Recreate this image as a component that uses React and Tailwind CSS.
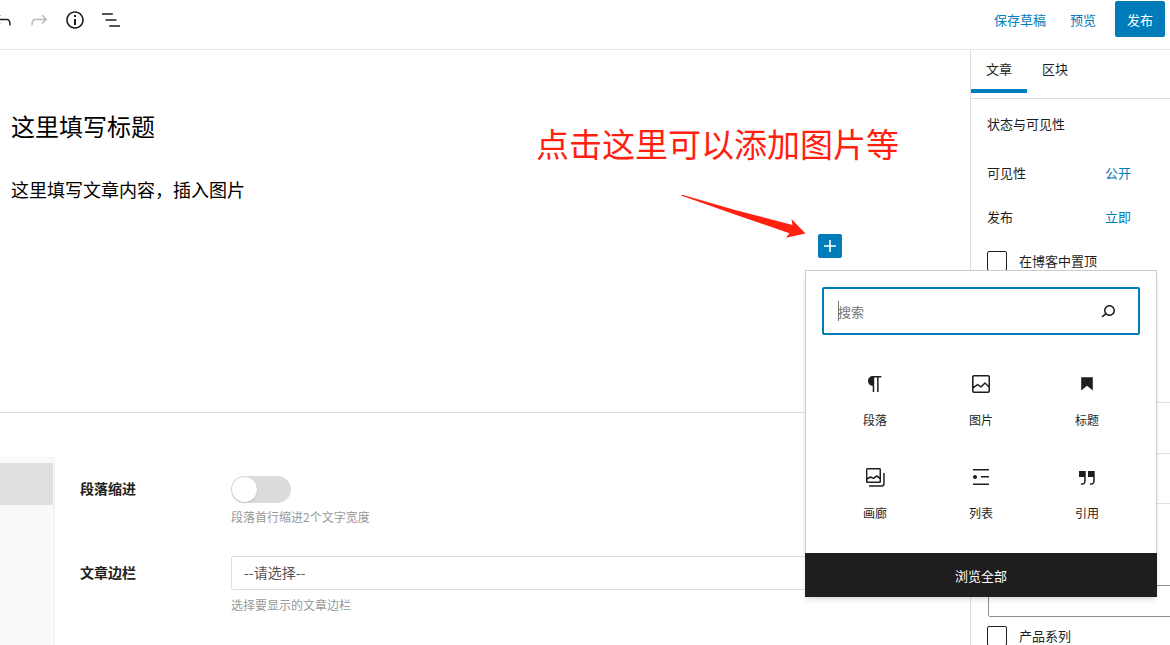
import { useState } from 'react';
import clsx from 'clsx';

const ICONS = {
    undo: 'M18.3 11.7c-.6-.6-1.4-.9-2.3-.9H6.7l2.9-3.3-1.1-1-4.5 5L8.5 16l1-1-2.7-2.7H16c.5 0 .9.2 1.3.5 1 1 1 3.4 1 4.5v.3h1.5v-.2c0-1.5 0-4.3-1.5-5.7z',
    redo: 'M15.6 6.5l-1.1 1 2.9 3.3H8c-.9 0-1.7.3-2.3.9-1.4 1.5-1.4 4.2-1.4 5.6v.2h1.5v-.3c0-1.1 0-3.5 1-4.5.3-.3.7-.5 1.3-.5h9.2L14.5 15l1.1 1.1 4.6-4.6-4.6-5z',
    info: 'M12 3.2c-4.8 0-8.8 3.9-8.8 8.8 0 4.8 3.9 8.8 8.8 8.8 4.8 0 8.8-3.9 8.8-8.8 0-4.8-4-8.8-8.8-8.8zm0 16c-4 0-7.2-3.3-7.2-7.2C4.8 8 8 4.8 12 4.8s7.2 3.3 7.2 7.2c0 4-3.2 7.2-7.2 7.2zM11 17h2v-6h-2v6zm0-8h2V7h-2v2z',
    outline: 'M13.8 5.2H3v1.5h10.8V5.2zm-3.6 12v1.5H21v-1.5H10.2zm7.2-6H6.6v1.5h10.8v-1.5z',
    plus: 'M18 11.2h-5.2V6h-1.6v5.2H6v1.6h5.2V18h1.6v-5.2H18z',
    search: 'M13.5 6C10.5 6 8 8.5 8 11.5c0 1.1.3 2.1.9 3l-3.4 3 1 1.1 3.4-2.9c1 .9 2.2 1.4 3.6 1.4 3 0 5.5-2.5 5.5-5.5C19 8.5 16.5 6 13.5 6zm0 9.5c-2.2 0-4-1.8-4-4s1.8-4 4-4 4 1.8 4 4-1.8 4-4 4z',
    paragraph: 'M18.3 4H9.9v-.1l-.9.2c-2.3.4-4 2.4-4 4.8s1.7 4.4 4 4.8l.7.1V20h1.5V5.5h2.9V20h1.5V5.5h2.7V4z',
    image: 'M19 3H5c-1.1 0-2 .9-2 2v14c0 1.1.9 2 2 2h14c1.1 0 2-.9 2-2V5c0-1.1-.9-2-2-2zM5 4.5h14c.3 0 .5.2.5.5v8.4l-3-2.9c-.3-.3-.8-.3-1 0L11.9 14 9 12c-.3-.2-.6-.2-.8 0l-3.6 2.6V5c-.1-.3.1-.5.4-.5zm14 15H5c-.3 0-.5-.2-.5-.5v-2.4l4.1-3 3 1.9c.3.2.7.2.9-.1L16 12l3.5 3.4V19c0 .3-.2.5-.5.5z',
    heading: 'M6.2 5.2v13.4l5.8-4.8 5.8 4.8V5.2z',
    gallery: 'M20.2 8v11c0 .7-.6 1.2-1.2 1.2H6v1.5h13c1.5 0 2.7-1.2 2.7-2.8V8h-1.5zM18 16.4V4.6c0-.9-.7-1.6-1.6-1.6H4.6C3.7 3 3 3.7 3 4.6v11.8c0 .9.7 1.6 1.6 1.6h11.8c.9 0 1.6-.7 1.6-1.6zM4.5 4.6c0-.1.1-.1.1-.1h11.8c.1 0 .1.1.1.1V12l-2.3-1.7c-.3-.2-.6-.2-.9 0l-2.9 2.1L8 11.3c-.2-.1-.5-.1-.7 0l-2.9 1.5V4.6zm0 11.8v-1.8l3.2-1.7 2.4 1.2c.2.1.5.1.8-.1l2.8-2 2.8 2v2.5c0 .1-.1.1-.1.1H4.6c0-.1-.1-.2-.1-.2z',
    list: 'M4 4v1.5h16V4H4zm8 8.5h8V11h-8v1.5zM4 20h16v-1.5H4V20zm4-8c0-1.1-.9-2-2-2s-2 .9-2 2 .9 2 2 2 2-.9 2-2z',
    quote: 'M13 6v6h5.2v4c0 .8-.2 1.4-.5 1.7-.6.6-1.6.6-2.5.5h-.3v1.5h.5c1 0 2.3-.1 3.3-1 .6-.6 1-1.6 1-2.8V6H13zm-9 6h5.2v4c0 .8-.2 1.4-.5 1.7-.6.6-1.6.6-2.5.5h-.3v1.5h.5c1 0 2.3-.1 3.3-1 .6-.6 1-1.6 1-2.8V6H4v6z',
};

const BLOCKS = [
    { icon: 'paragraph', label: '段落' },
    { icon: 'image', label: '图片' },
    { icon: 'heading', label: '标题' },
    { icon: 'gallery', label: '画廊' },
    { icon: 'list', label: '列表' },
    { icon: 'quote', label: '引用' },
];

const Icon = ({ name }) => (
    <svg viewBox="0 0 24 24" className="h-6 w-6 shrink-0" fill="currentColor" aria-hidden="true">
        <path d={ICONS[name]} />
    </svg>
);

const ToolButton = ({ icon, label, disabled }) => (
    <button
        type="button"
        aria-label={label}
        disabled={disabled}
        className="flex h-9 w-9 shrink-0 items-center justify-center disabled:text-[#bbb]"
    >
        <Icon name={icon} />
    </button>
);

const CheckRow = ({ id, label }) => (
    <div className="flex h-5 items-center gap-3">
        <input
            id={id}
            type="checkbox"
            className="h-5 w-5 shrink-0 appearance-none rounded-xs border border-[#1e1e1e] bg-white"
        />
        <label htmlFor={id} className="whitespace-nowrap">{label}</label>
    </div>
);

const Header = () => (
    <header className="flex h-[50px] shrink-0 items-start justify-between border-b border-[#e8e8e8] pr-[5px]">
        <div className="-ml-[15px] flex pt-0.5">
            <ToolButton icon="undo" label="撤销" />
            <ToolButton icon="redo" label="重做" disabled />
            <ToolButton icon="info" label="详情" />
            <ToolButton icon="outline" label="大纲" />
        </div>
        <div className="flex items-center pt-px text-[13px] text-[#007cba]">
            <button type="button" className="h-9 px-3 pt-0.5">保存草稿</button>
            <button type="button" className="h-9 px-3 pt-0.5">预览</button>
            <button type="button" className="ml-[7px] h-9 rounded-xs bg-[#007cba] px-3 pt-0.5 text-white">发布</button>
        </div>
    </header>
);

const Inserter = () => (
    <div className="absolute top-[220px] -right-[187px] z-10 w-[352px] border border-[#ccc] bg-white shadow-md">
        <div className="relative mx-4 mt-4">
            <input
                type="text"
                aria-label="搜索"
                placeholder="搜索"
                className="h-12 w-full rounded-xs border-2 border-[#007cba] pr-12 pl-3.5 text-[13px] outline-none placeholder:text-[#757575]"
            />
            <span className="absolute top-3.5 left-4 h-5 w-px bg-[#777]" />
            <button type="button" aria-label="提交搜索" className="absolute top-3 right-5">
                <Icon name="search" />
            </button>
        </div>
        <div className="mx-4 mt-[25px] mb-[7px] grid grid-cols-3">
            {BLOCKS.map((block) => (
                <button
                    key={block.label}
                    type="button"
                    className="flex h-[93px] flex-col items-center gap-4 pt-3 text-xs"
                >
                    <Icon name={block.icon} />
                    <span>{block.label}</span>
                </button>
            ))}
        </div>
        <button type="button" className="-mx-px -mb-px block h-11 w-[352px] bg-[#1e1e1e] pt-0.5 text-[13px] text-white">
            浏览全部
        </button>
    </div>
);

const Settings = () => {
    const [indent, setIndent] = useState(false);

    return (
        <section className="flex flex-1 pt-11">
            <div className="w-[55px] shrink-0 border-r border-[#eee] bg-[#f8f9fb] pt-1.5">
                <div className="mr-px h-[42px] bg-[#dfe0e2]" />
            </div>
            <div className="flex flex-1 flex-col pt-[19px] pr-6 pl-[25px]">
                <div className="flex h-20">
                    <label htmlFor="indent" className="w-[151px] shrink-0 text-sm leading-6 font-bold text-[#222]">段落缩进</label>
                    <div>
                        <label
                            className={clsx(
                                'flex h-[27px] w-[60px] items-center rounded-full',
                                indent ? 'justify-end bg-[#007cba]' : 'bg-[#dcdcdc]'
                            )}
                        >
                            <input
                                id="indent"
                                type="checkbox"
                                className="sr-only"
                                checked={indent}
                                onChange={(e) => setIndent(e.target.checked)}
                            />
                            <span className="mx-px h-[25px] w-[25px] rounded-full bg-white shadow-sm" />
                        </label>
                        <p className="mt-1 text-xs leading-5 text-[#999]">段落首行缩进2个文字宽度</p>
                    </div>
                </div>
                <div className="flex">
                    <label htmlFor="side" className="w-[151px] shrink-0 text-sm leading-8 font-bold text-[#222]">文章边栏</label>
                    <div className="flex-1">
                        <select
                            id="side"
                            className="h-[34px] w-full appearance-none rounded-xs border border-[#ddd] bg-white px-3 pb-0.5 text-sm text-[#555]"
                        >
                            <option>--请选择--</option>
                        </select>
                        <p className="mt-[5px] text-xs leading-5 text-[#999]">选择要显示的文章边栏</p>
                    </div>
                </div>
            </div>
        </section>
    );
};

const Sidebar = () => (
    <aside className="flex w-[200px] shrink-0 flex-col overflow-hidden border-l border-[#ddd] text-[13px] leading-5">
        <div className="flex h-[49px] shrink-0 items-start border-b border-[#ddd]">
            <button type="button" className="h-[43px] w-14 border-b-4 border-[#007cba] pb-0.5">文章</button>
            <button type="button" className="h-[43px] w-14 border-b-4 border-transparent pb-0.5">区块</button>
        </div>
        <div className="flex h-[303px] shrink-0 flex-col pt-[15px] pl-4">
            <h2>状态与可见性</h2>
            <div className="mt-7 flex pt-px">
                <span className="w-[118px]">可见性</span>
                <a href="#visibility" className="text-[#007cba]">公开</a>
            </div>
            <div className="mt-6 mb-6 flex">
                <span className="w-[118px]">发布</span>
                <a href="#publish" className="text-[#007cba]">立即</a>
            </div>
            <CheckRow id="sticky" label="在博客中置顶" />
        </div>
        <div className="h-[51px] shrink-0 border-t border-[#e2e2e2]" />
        <div className="h-[50px] shrink-0 border-t border-[#e2e2e2]" />
        <div className="shrink-0 border-t border-[#e2e2e2] pt-[81px] pl-4">
            <input
                type="text"
                aria-label="搜索分类"
                className="mb-[9px] ml-px block h-8 w-60 rounded-xs border border-[#8c8f94]"
            />
            <CheckRow id="series" label="产品系列" />
        </div>
    </aside>
);

export default function App() {
    return (
        <div className="flex h-screen flex-col overflow-hidden bg-white font-['Noto_Sans_CJK_SC',sans-serif] text-[#1e1e1e]">
            <Header />
            <div className="flex min-h-0 flex-1">
                <main className="relative flex flex-1 flex-col">
                    <div className="h-[363px] shrink-0 border-b border-[#ddd] pt-[58px] pl-[11px] text-black">
                        <h1 className="text-2xl leading-9">这里填写标题</h1>
                        <p className="mt-[31px] text-lg leading-7">这里填写文章内容，插入图片</p>
                    </div>
                    <Settings />

                    {/* Annotation over the canvas */}
                    <p className="absolute top-[69px] right-[71px] text-[33px] leading-12 whitespace-nowrap text-[#ff2010]">
                        点击这里可以添加图片等
                    </p>
                    <svg viewBox="0 0 126 46" className="absolute top-[143px] right-[163px] h-[46px] w-[126px]" aria-hidden="true">
                        <path d="M0 2.5Q1 1.5 2 2L54 17L111.5 32L110.5 26L124.5 40.5L105 44.7L108.5 40.3L54 21.5Z" fill="#ff2010" />
                    </svg>

                    <button
                        type="button"
                        aria-label="添加区块"
                        className="absolute top-[184px] right-32 flex h-6 w-6 items-center justify-center rounded-xs bg-[#007cba] text-white"
                    >
                        <Icon name="plus" />
                    </button>
                    <Inserter />
                </main>
                <Sidebar />
            </div>
        </div>
    );
}
